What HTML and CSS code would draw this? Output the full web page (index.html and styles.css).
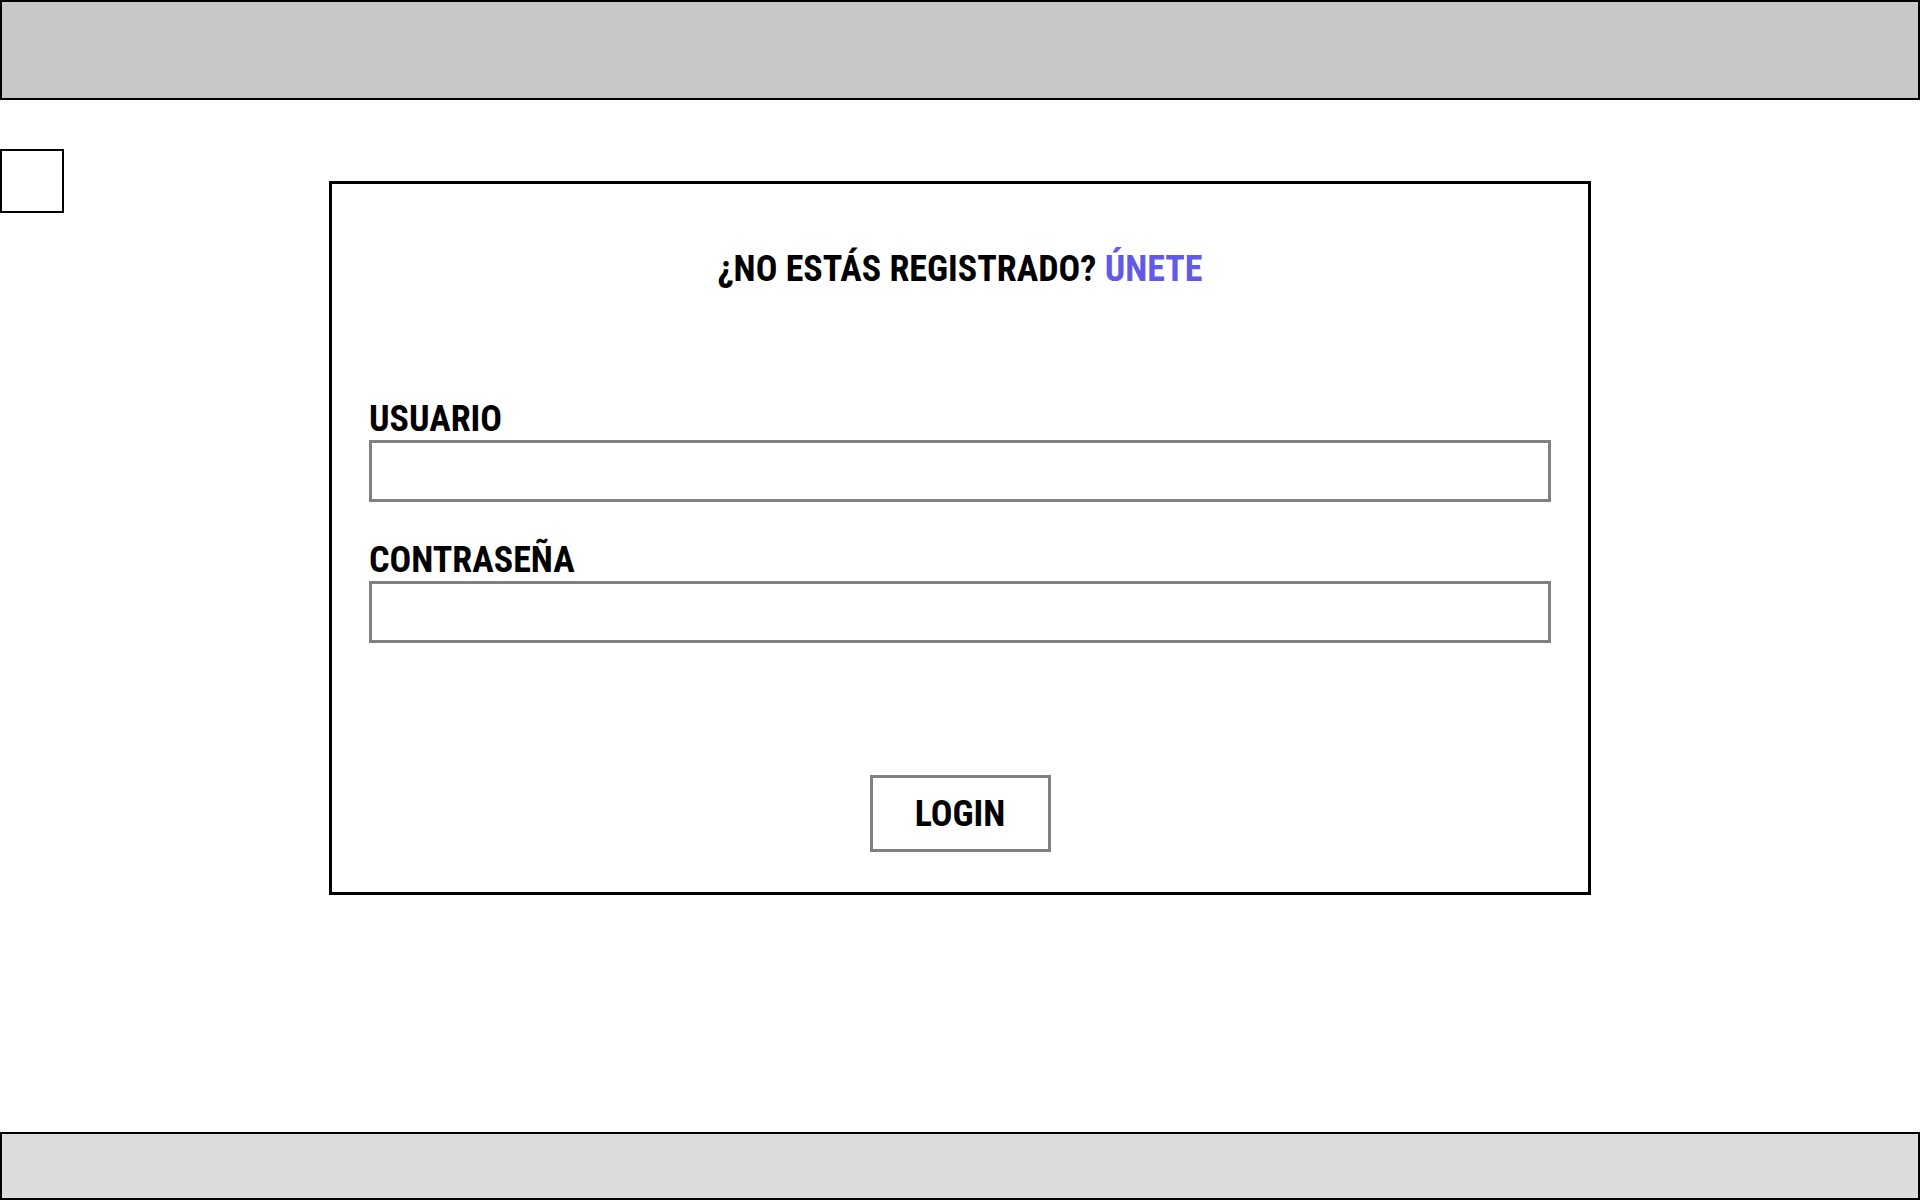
FILE: index.html
```html
<!DOCTYPE html>
<html lang="es">
<head>
<meta charset="utf-8">
<title>Login</title>
<link rel="stylesheet" href="styles.css">
</head>
<body>
<header class="topbar"></header>
<main class="main">
  <div class="back-box"></div>
  <section class="card">
    <h1 class="title">¿NO ESTÁS REGISTRADO? <a class="join" href="#">ÚNETE</a></h1>
    <form class="form">
      <div class="field field-user">
        <label class="label" for="user">USUARIO</label>
        <input class="input" id="user" type="text">
      </div>
      <div class="field field-pass">
        <label class="label" for="pass">CONTRASEÑA</label>
        <input class="input" id="pass" type="password">
      </div>
      <div class="actions">
        <button class="btn" type="button">LOGIN</button>
      </div>
    </form>
  </section>
</main>
<footer class="bottombar"></footer>
</body>
</html>
```

FILE: styles.css
```css
* { box-sizing: border-box; }
html, body { margin: 0; padding: 0; }
body {
  width: 1920px;
  height: 1200px;
  display: flex;
  flex-direction: column;
  background: #fff;
  font-family: "Roboto Condensed", "Roboto", "Liberation Sans", sans-serif;
  font-stretch: condensed;
  font-weight: 700;
  color: #000;
}
.topbar {
  height: 100px;
  background: #c8c8c8;
  border: 2px solid #000;
  flex: none;
}
.main {
  flex: 1;
  display: grid;
  grid-template-columns: 1fr 1262px 1fr;
  align-items: start;
}
.back-box {
  grid-column: 1;
  justify-self: start;
  width: 64px;
  height: 64px;
  margin-top: 49px;
  border: 2px solid #000;
}
.card {
  grid-column: 2;
  width: 1262px;
  margin-top: 81px;
  border: 3px solid #000;
  padding: 64px 37px 40px;
}
.title {
  margin: 0;
  font-size: 36px;
  line-height: 42px;
  font-weight: 700;
  text-align: center;
}
.join {
  color: #6359e9;
  text-decoration: none;
}
.form {
  display: flex;
  flex-direction: column;
}
.field {
  display: flex;
  flex-direction: column;
}
.field-user { margin-top: 108px; }
.field-pass { margin-top: 37px; }
.label {
  font-size: 36px;
  line-height: 42px;
}
.input {
  width: 100%;
  height: 62px;
  border: 3px solid #808080;
  background: #fff;
  outline: none;
  margin: 0;
  padding: 0 12px;
  font: inherit;
}
.actions {
  display: flex;
  justify-content: center;
  margin-top: 132px;
}
.btn {
  width: 181px;
  height: 77px;
  border: 3px solid #808080;
  background: #fff;
  padding: 0;
  font-family: inherit;
  font-stretch: condensed;
  font-weight: 700;
  font-size: 36px;
  line-height: 42px;
  color: #000;
  display: flex;
  align-items: center;
  justify-content: center;
}
.bottombar {
  height: 68px;
  background: #dcdcdc;
  border: 2px solid #000;
  flex: none;
}
```
